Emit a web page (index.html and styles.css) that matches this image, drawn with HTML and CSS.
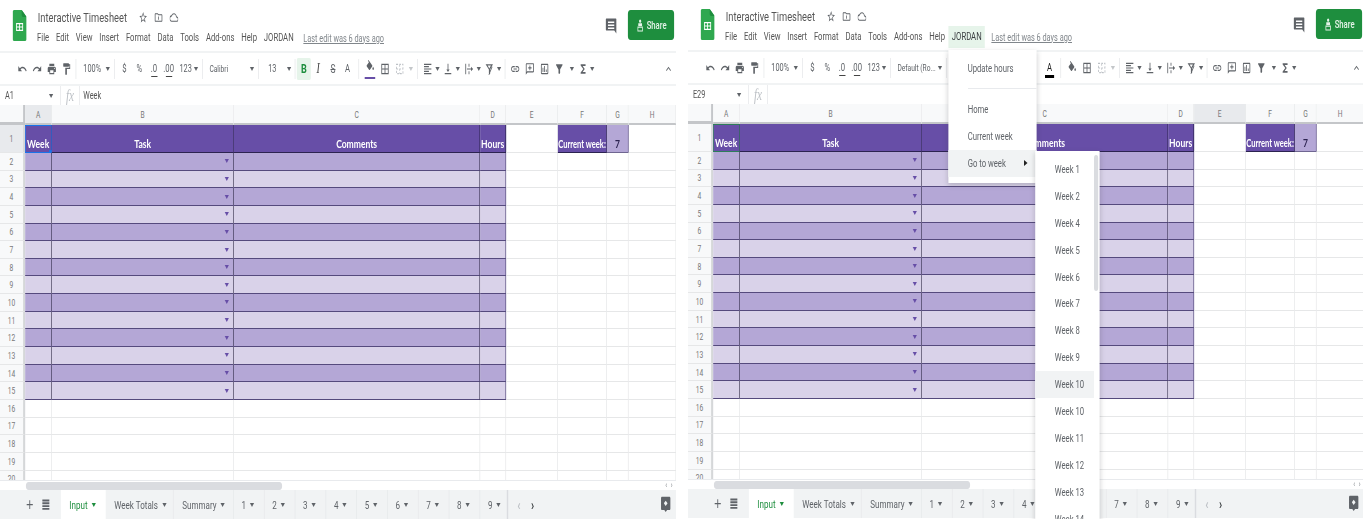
FILE: index.html
```html
<!DOCTYPE html>
<html lang="en">
  <head>
    <meta charset="UTF-8" />
    <title>Interactive Timesheet</title>
    <link rel="stylesheet" href="styles.css">
  </head>
  <body>
    <svg class="sprite" width="0" height="0">
      <symbol id="i-undo" viewBox="0 0 24 24"><path d="M12.5 8c-2.65 0-5.05.99-6.9 2.6L2 7v9h9l-3.62-3.62c1.39-1.16 3.16-1.88 5.12-1.88 3.54 0 6.55 2.31 7.6 5.5l2.37-.78C21.08 11.03 17.15 8 12.5 8z"/></symbol>
      <symbol id="i-redo" viewBox="0 0 24 24"><path d="M18.4 10.6C16.55 8.99 14.15 8 11.5 8c-4.65 0-8.58 3.03-9.96 7.22L3.9 16c1.05-3.19 4.05-5.5 7.6-5.5 1.95 0 3.73.72 5.12 1.88L13 16h9V7l-3.6 3.6z"/></symbol>
      <symbol id="i-print" viewBox="0 0 24 24"><path d="M19 8H5c-1.66 0-3 1.34-3 3v6h4v4h12v-4h4v-6c0-1.66-1.34-3-3-3zm-3 11H8v-5h8v5zm3-7c-.55 0-1-.45-1-1s.45-1 1-1 1 .45 1 1-.45 1-1 1zm-1-9H6v4h12V3z"/></symbol>
      <symbol id="i-paint" viewBox="0 0 24 24"><path d="M18 4V3c0-.55-.45-1-1-1H5c-.55 0-1 .45-1 1v4c0 .55.45 1 1 1h12c.55 0 1-.45 1-1V6h1v4H9v11c0 .55.45 1 1 1h2c.55 0 1-.45 1-1v-9h8V4h-3z"/></symbol>
      <symbol id="i-fill" viewBox="0 0 24 24"><path d="M16.56 8.94L7.62 0 6.21 1.41l2.38 2.38-5.15 5.15c-.59.59-.59 1.54 0 2.12l5.5 5.5c.29.29.68.44 1.06.44s.77-.15 1.06-.44l5.5-5.5c.59-.58.59-1.53 0-2.12zM19 11.5s-2 2.17-2 3.5c0 1.1.9 2 2 2s2-.9 2-2c0-1.33-2-3.5-2-3.5z"/></symbol>
      <symbol id="i-borders" viewBox="0 0 24 24"><path d="M3 3v18h18V3H3zm8 16H5v-6h6v6zm0-8H5V5h6v6zm8 8h-6v-6h6v6zm0-8h-6V5h6v6z"/></symbol>
      <symbol id="i-merge" viewBox="0 0 24 24"><path fill="none" stroke="currentColor" stroke-width="2" stroke-dasharray="4 3" d="M4 4h16v16H4zM4 12h16M12 4v16"/></symbol>
      <symbol id="i-align" viewBox="0 0 24 24"><path d="M15 15H3v2h12v-2zm0-8H3v2h12V7zM3 13h18v-2H3v2zm0 8h18v-2H3v2zM3 3v2h18V3H3z"/></symbol>
      <symbol id="i-valign" viewBox="0 0 24 24"><path d="M16 13h-3V3h-2v10H8l4 4 4-4zM4 19v2h16v-2H4z"/></symbol>
      <symbol id="i-wrap" viewBox="0 0 24 24"><path d="M3 3h2v18H3zM11 3h2v5h-2zM11 16h2v5h-2zM7 11h10V8l5 4-5 4v-3H7z"/></symbol>
      <symbol id="i-rotate" viewBox="0 0 24 24"><path d="M3 4h18l-7 9v8h-2l-1-2V13zm5 2l4 5 4-5z M20 8l-8 14h-2l8-14z"/></symbol>
      <symbol id="i-link" viewBox="0 0 24 24"><path d="M3.9 12c0-1.71 1.39-3.1 3.1-3.1h4V7H7c-2.76 0-5 2.24-5 5s2.24 5 5 5h4v-1.9H7c-1.71 0-3.1-1.39-3.1-3.1zM8 13h8v-2H8v2zm9-6h-4v1.9h4c1.71 0 3.1 1.39 3.1 3.1s-1.39 3.1-3.1 3.1h-4V17h4c2.76 0 5-2.24 5-5s-2.24-5-5-5z"/></symbol>
      <symbol id="i-comment" viewBox="0 0 24 24"><path d="M20 2H4c-1.1 0-2 .9-2 2v18l4-4h14c1.1 0 2-.9 2-2V4c0-1.1-.9-2-2-2zm0 14H5l-1 1V4h16v12zM11 6h2v3h3v2h-3v3h-2v-3H8V9h3z"/></symbol>
      <symbol id="i-chart" viewBox="0 0 24 24"><path d="M19 3H5c-1.1 0-2 .9-2 2v14c0 1.1.9 2 2 2h14c1.1 0 2-.9 2-2V5c0-1.1-.9-2-2-2zm0 16H5V5h14v14zM7 10h2v7H7zm4-3h2v10h-2zm4 6h2v4h-2z"/></symbol>
      <symbol id="i-filter" viewBox="0 0 24 24"><path d="M4.25 5.61C6.27 8.2 10 13 10 13v6c0 .55.45 1 1 1h2c.55 0 1-.45 1-1v-6s3.72-4.8 5.74-7.39c.51-.66.04-1.61-.79-1.61H5.04c-.83 0-1.3.95-.79 1.61z"/></symbol>
      <symbol id="i-sigma" viewBox="0 0 24 24"><path d="M18 4H6v2l6.5 6L6 18v2h12v-3h-7l5-5-5-5h7z"/></symbol>
      <symbol id="i-up" viewBox="0 0 24 24"><path d="M7.41 15.41L12 10.83l4.59 4.58L18 14l-6-6-6 6z"/></symbol>
      <symbol id="i-star" viewBox="0 0 24 24"><path d="M22 9.24l-7.19-.62L12 2 9.19 8.63 2 9.24l5.46 4.73L5.82 21 12 17.27 18.18 21l-1.63-7.03L22 9.24zM12 15.4l-3.76 2.27 1-4.28-3.32-2.88 4.38-.38L12 6.1l1.71 4.04 4.38.38-3.32 2.88 1 4.28L12 15.4z"/></symbol>
      <symbol id="i-folder" viewBox="0 0 24 24"><path d="M20 6h-8l-2-2H4c-1.1 0-2 .9-2 2v12c0 1.1.9 2 2 2h16c1.1 0 2-.9 2-2V8c0-1.1-.9-2-2-2zm0 12H4V6h5.17l2 2H20v10zM11 10h2v6h-2z"/></symbol>
      <symbol id="i-cloud" viewBox="0 0 24 24"><path d="M19.35 10.04C18.67 6.59 15.64 4 12 4 9.11 4 6.6 5.64 5.35 8.04 2.34 8.36 0 10.91 0 14c0 3.31 2.69 6 6 6h13c2.76 0 5-2.24 5-5 0-2.64-2.05-4.78-4.65-4.96zM19 18H6c-2.21 0-4-1.79-4-4s1.79-4 4-4h.71C7.37 7.69 9.48 6 12 6c3.04 0 5.5 2.46 5.5 5.5v.5H19c1.66 0 3 1.34 3 3s-1.34 3-3 3z"/></symbol>
      <symbol id="i-note" viewBox="0 0 24 24"><path d="M3 2h18c.6 0 1 .4 1 1v19l-4-4H3c-.6 0-1-.4-1-1V3c0-.6.4-1 1-1zm3 4v2h12V6zm0 4v2h12v-2zm0 4v2h12v-2z"/></symbol>
      <symbol id="i-person" viewBox="0 0 24 24"><path d="M12 1a3 3 0 110 6 3 3 0 010-6zM7 8h10v5H7zM5 14h14v9H5zm2 2v5h10v-5z"/></symbol>
      <symbol id="i-plus" viewBox="0 0 24 24"><path d="M19 13h-6v6h-2v-6H5v-2h6V5h2v6h6z"/></symbol>
      <symbol id="i-list" viewBox="0 0 24 24"><path d="M4 4h16v3H4zm0 4.500h16v3H4zM4 13h16v3H4zm0 4.500h16v3H4z"/></symbol>
      <symbol id="i-explore" viewBox="0 0 24 24"><path d="M4 1h16c1 0 2 1 2 2v16c0 1-1 2-2 2h-5l-3 3-3-3H4c-1 0-2-1-2-2V3c0-1 1-2 2-2zm8 6l-4 4 4 4 4-4z"/></symbol>
    </svg>

    <main class="screens">
      <section class="shot">
        <div class="app">
          <header class="topbar">
            <svg class="logo" viewBox="0 0 20 31" preserveAspectRatio="none"><path fill="#2fa84f" d="M2 0h11l7 7v22c0 1-1 2-2 2H2c-1 0-2-1-2-2V2C0 1 1 0 2 0z"/><path fill="#1e8e3e" d="M13 0l7 7h-5c-1 0-2-1-2-2z"/><path fill="#fff" d="M5 13h10v8H5zm1.200 1.200v2.200h3.200v-2.200zm4.400 0v2.200h3.200v-2.200zm-4.400 3.400v2.200h3.200v-2.200zm4.400 0v2.200h3.200v-2.200z" fill-rule="evenodd"/></svg>
            <div class="doc">
              <div class="doc-title">
                <span class="doc-name">Interactive Timesheet</span>
                <svg class="doc-icon"><use href="#i-star"/></svg>
                <svg class="doc-icon"><use href="#i-folder"/></svg>
                <svg class="doc-icon"><use href="#i-cloud"/></svg>
              </div>
              <nav class="menubar">
                <span>File</span><span>Edit</span><span>View</span><span>Insert</span><span>Format</span><span>Data</span><span>Tools</span><span>Add-ons</span><span>Help</span><span>JORDAN</span>
                <a class="last-edit">Last edit was 6 days ago</a>
              </nav>
            </div>
            <svg class="note-icon"><use href="#i-note"/></svg>
            <div class="share"><svg><use href="#i-person"/></svg>Share</div>
          </header>

          <div class="toolbar">
            <span class="tb"><svg><use href="#i-undo"/></svg></span>
            <span class="tb"><svg><use href="#i-redo"/></svg></span>
            <span class="tb"><svg><use href="#i-print"/></svg></span>
            <span class="tb"><svg><use href="#i-paint"/></svg></span>
            <i class="sep"></i>
            <span class="tb-txt tb-zoom">100%</span><i class="caret"></i>
            <i class="sep"></i>
            <span class="tb tb-sym">$</span><span class="tb tb-sym">%</span><span class="tb tb-sym">.0<u></u></span><span class="tb tb-sym">.00<u></u></span>
            <span class="tb-txt tb-num">123</span><i class="caret"></i>
            <i class="sep"></i>
            <span class="tb-txt tb-font">Calibri</span><i class="caret"></i>
            <i class="sep"></i>
            <span class="tb-txt tb-size">13</span><i class="caret"></i>
            <i class="sep sep-thin"></i>
            <span class="tb tb-bold is-on">B</span>
            <span class="tb tb-italic">I</span>
            <span class="tb tb-sym tb-strike">S</span>
            <span class="tb tb-sym">A</span>
            <i class="sep sep-wide"></i>
            <span class="tb tb-fill"><svg><use href="#i-fill"/></svg><b class="swatch"></b></span>
            <span class="tb"><svg><use href="#i-borders"/></svg></span>
            <span class="tb tb-dim"><svg><use href="#i-merge"/></svg></span><i class="caret caret-dim"></i>
            <i class="sep"></i>
            <span class="tb"><svg><use href="#i-align"/></svg></span><i class="caret caret-sm"></i>
            <span class="tb"><svg><use href="#i-valign"/></svg></span><i class="caret caret-sm"></i>
            <span class="tb"><svg><use href="#i-wrap"/></svg></span><i class="caret caret-sm"></i>
            <span class="tb"><svg><use href="#i-rotate"/></svg></span><i class="caret caret-sm"></i>
            <i class="sep"></i>
            <span class="tb"><svg><use href="#i-link"/></svg></span>
            <span class="tb"><svg><use href="#i-comment"/></svg></span>
            <span class="tb"><svg><use href="#i-chart"/></svg></span>
            <span class="tb"><svg><use href="#i-filter"/></svg></span><i class="caret caret-wide"></i>
            <span class="tb tb-sum"><svg><use href="#i-sigma"/></svg></span><i class="caret caret-sm"></i>
            <span class="tb tb-end"><svg><use href="#i-up"/></svg></span>
          </div>

          <div class="formula">
            <span class="name-box">A1</span><i class="caret"></i>
            <i class="sep sep-tall"></i>
            <span class="fx">fx</span>
            <i class="sep sep-tall"></i>
            <span class="formula-text">Week</span>
          </div>

          <div class="sheet" data-active="A1" data-col="A"></div>

          <div class="hscroll">
            <div class="hscroll-thumb"></div>
            <span class="hscroll-arrows">&#8249; &#8250;</span>
          </div>

          <footer class="tabs">
            <span class="tabs-tools"><svg><use href="#i-plus"/></svg><svg><use href="#i-list"/></svg></span>
            <span class="tab tab-input is-active">Input<i class="caret"></i></span>
            <span class="tab tab-totals">Week Totals<i class="caret"></i></span>
            <span class="tab tab-summary">Summary<i class="caret"></i></span>
            <span class="tab tab-n">1<i class="caret"></i></span>
            <span class="tab tab-n">2<i class="caret"></i></span>
            <span class="tab tab-n">3<i class="caret"></i></span>
            <span class="tab tab-n">4<i class="caret"></i></span>
            <span class="tab tab-n">5<i class="caret"></i></span>
            <span class="tab tab-n">6<i class="caret"></i></span>
            <span class="tab tab-n">7<i class="caret"></i></span>
            <span class="tab tab-n">8<i class="caret"></i></span>
            <span class="tab tab-n tab-last">9<i class="caret"></i></span>
            <span class="tab-nav"><b class="dim">&#8249;</b><b>&#8250;</b></span>
            <svg class="explore"><use href="#i-explore"/></svg>
          </footer>
        </div>
      </section>

      <section class="shot shot-right">
        <div class="app">
          <header class="topbar">
            <svg class="logo" viewBox="0 0 20 31" preserveAspectRatio="none"><path fill="#2fa84f" d="M2 0h11l7 7v22c0 1-1 2-2 2H2c-1 0-2-1-2-2V2C0 1 1 0 2 0z"/><path fill="#1e8e3e" d="M13 0l7 7h-5c-1 0-2-1-2-2z"/><path fill="#fff" d="M5 13h10v8H5zm1.200 1.200v2.200h3.200v-2.200zm4.400 0v2.200h3.200v-2.200zm-4.400 3.400v2.200h3.200v-2.200zm4.400 0v2.200h3.200v-2.200z" fill-rule="evenodd"/></svg>
            <div class="doc">
              <div class="doc-title">
                <span class="doc-name">Interactive Timesheet</span>
                <svg class="doc-icon"><use href="#i-star"/></svg>
                <svg class="doc-icon"><use href="#i-folder"/></svg>
                <svg class="doc-icon"><use href="#i-cloud"/></svg>
              </div>
              <nav class="menubar">
                <span>File</span><span>Edit</span><span>View</span><span>Insert</span><span>Format</span><span>Data</span><span>Tools</span><span>Add-ons</span><span>Help</span><span class="is-open">JORDAN</span>
                <a class="last-edit">Last edit was 6 days ago</a>
              </nav>
            </div>
            <svg class="note-icon"><use href="#i-note"/></svg>
            <div class="share"><svg><use href="#i-person"/></svg>Share</div>
          </header>

          <div class="toolbar">
            <span class="tb"><svg><use href="#i-undo"/></svg></span>
            <span class="tb"><svg><use href="#i-redo"/></svg></span>
            <span class="tb"><svg><use href="#i-print"/></svg></span>
            <span class="tb"><svg><use href="#i-paint"/></svg></span>
            <i class="sep"></i>
            <span class="tb-txt tb-zoom">100%</span><i class="caret"></i>
            <i class="sep"></i>
            <span class="tb tb-sym">$</span><span class="tb tb-sym">%</span><span class="tb tb-sym">.0<u></u></span><span class="tb tb-sym">.00<u></u></span>
            <span class="tb-txt tb-num">123</span><i class="caret"></i>
            <i class="sep"></i>
            <span class="tb-txt tb-font">Default (Ro...</span><i class="caret"></i>
            <i class="sep"></i>
            <span class="tb-gap"></span>
            <span class="tb tb-sym tb-color">A</span>
            <i class="sep sep-wide"></i>
            <span class="tb"><svg><use href="#i-fill"/></svg></span>
            <span class="tb"><svg><use href="#i-borders"/></svg></span>
            <span class="tb tb-dim"><svg><use href="#i-merge"/></svg></span><i class="caret caret-dim"></i>
            <i class="sep"></i>
            <span class="tb"><svg><use href="#i-align"/></svg></span><i class="caret caret-sm"></i>
            <span class="tb"><svg><use href="#i-valign"/></svg></span><i class="caret caret-sm"></i>
            <span class="tb"><svg><use href="#i-wrap"/></svg></span><i class="caret caret-sm"></i>
            <span class="tb"><svg><use href="#i-rotate"/></svg></span><i class="caret caret-sm"></i>
            <i class="sep"></i>
            <span class="tb"><svg><use href="#i-link"/></svg></span>
            <span class="tb"><svg><use href="#i-comment"/></svg></span>
            <span class="tb"><svg><use href="#i-chart"/></svg></span>
            <span class="tb"><svg><use href="#i-filter"/></svg></span><i class="caret caret-wide"></i>
            <span class="tb tb-sum"><svg><use href="#i-sigma"/></svg></span><i class="caret caret-sm"></i>
            <span class="tb tb-end"><svg><use href="#i-up"/></svg></span>
          </div>

          <div class="formula">
            <span class="name-box">E29</span><i class="caret"></i>
            <i class="sep sep-tall"></i>
            <span class="fx">fx</span>
            <i class="sep sep-tall"></i>
          </div>

          <div class="sheet" data-col="E"></div>

          <div class="hscroll">
            <div class="hscroll-thumb"></div>
            <span class="hscroll-arrows">&#8249; &#8250;</span>
          </div>

          <footer class="tabs">
            <span class="tabs-tools"><svg><use href="#i-plus"/></svg><svg><use href="#i-list"/></svg></span>
            <span class="tab tab-input is-active">Input<i class="caret"></i></span>
            <span class="tab tab-totals">Week Totals<i class="caret"></i></span>
            <span class="tab tab-summary">Summary<i class="caret"></i></span>
            <span class="tab tab-n">1<i class="caret"></i></span>
            <span class="tab tab-n">2<i class="caret"></i></span>
            <span class="tab tab-n">3<i class="caret"></i></span>
            <span class="tab tab-n">4<i class="caret"></i></span>
            <span class="tab tab-n tab-covered">5<i class="caret"></i></span>
            <span class="tab tab-n tab-covered">6<i class="caret"></i></span>
            <span class="tab tab-n">7<i class="caret"></i></span>
            <span class="tab tab-n">8<i class="caret"></i></span>
            <span class="tab tab-n tab-last">9<i class="caret"></i></span>
            <span class="tab-nav"><b class="dim">&#8249;</b><b>&#8250;</b></span>
            <svg class="explore"><use href="#i-explore"/></svg>
          </footer>

          <div class="menu">
            <div class="menu-item">Update hours</div>
            <div class="menu-line"></div>
            <div class="menu-item">Home</div>
            <div class="menu-item">Current week</div>
            <div class="menu-item is-hover">Go to week<i class="menu-arrow"></i></div>
          </div>

          <div class="submenu">
            <div class="submenu-item">Week 1</div>
            <div class="submenu-item">Week 2</div>
            <div class="submenu-item">Week 4</div>
            <div class="submenu-item">Week 5</div>
            <div class="submenu-item">Week 6</div>
            <div class="submenu-item">Week 7</div>
            <div class="submenu-item">Week 8</div>
            <div class="submenu-item">Week 9</div>
            <div class="submenu-item is-hover">Week 10</div>
            <div class="submenu-item">Week 10</div>
            <div class="submenu-item">Week 11</div>
            <div class="submenu-item">Week 12</div>
            <div class="submenu-item">Week 13</div>
            <div class="submenu-item">Week 14</div>
            <div class="submenu-thumb"></div>
          </div>
        </div>
      </section>
    </main>
    <script src="script.js"></script>
  </body>
</html>
```

FILE: styles.css
```css
/* the capture is squeezed sideways, so each app is laid out wide and scaled by .7 */
body {
  margin: 0;
  height: 519px;
  overflow: hidden;
  background: #ffffff;
  font-family: Roboto, "Liberation Sans", sans-serif;
  color: #5f6368;
}
.sprite {
  display: block;
  height: 0;
}
.screens {
  display: flex;
  gap: 12px;
}
.shot {
  width: 676px;
  height: 519px;
  overflow: hidden;
  flex: none;
}
.shot-right {
  width: 675px;
  margin-top: -1px;
  height: 520px;
}
.app {
  position: relative;
  width: 966px;
  height: 520px;
  transform: scaleX(0.7);
  transform-origin: left top;
  filter: blur(0.5px);
}
i {
  font-style: normal;
}

/* title bar */
.topbar {
  display: flex;
  align-items: flex-start;
  box-sizing: border-box;
  height: 53px;
  padding: 10px 3px 0 18px;
  border-bottom: 2px solid #f1f3f4;
}
.logo {
  width: 20px;
  height: 31px;
  flex: none;
}
.doc {
  margin-left: 10px;
  flex: 1;
}
.doc-title {
  display: flex;
  align-items: center;
  height: 14px;
  padding-left: 6px;
}
.doc-name {
  font-size: 13.300px;
  color: #555;
  margin-right: 17px;
}
.doc-icon {
  width: 13px;
  height: 13px;
  margin-right: 9px;
  fill: #5f6368;
}
.menubar {
  display: flex;
  align-items: center;
  height: 22px;
  margin-top: 3px;
  font-size: 11px;
  color: #555;
}
.menubar span {
  padding: 0 4.900px;
  line-height: 22px;
}
.menubar .is-open {
  background: #e6f4ea;
  color: #3c4043;
}
.last-edit {
  margin-left: 9px;
  font-size: 10.500px;
  color: #80868b;
  text-decoration: underline;
}
.note-icon {
  width: 18px;
  height: 18px;
  margin: 7px 15px 0 0;
  fill: #5f6368;
}
.share {
  display: flex;
  align-items: center;
  justify-content: center;
  gap: 3px;
  width: 66px;
  height: 30px;
  border-radius: 4px;
  background: #1e8e3e;
  color: #e6f4ea;
  font-size: 11px;
  font-weight: 500;
}
.share svg {
  width: 13px;
  height: 15px;
  fill: #e6f4ea;
}

/* toolbar */
.toolbar {
  display: flex;
  align-items: center;
  box-sizing: border-box;
  height: 33px;
  padding-left: 21px;
  border-bottom: 2px solid #f1f3f4;
  font-size: 10.500px;
  color: #5f6368;
}
.tb {
  display: flex;
  align-items: center;
  justify-content: center;
  position: relative;
  flex: none;
  width: 21px;
  height: 22px;
}
.tb svg {
  width: 14px;
  height: 14px;
  fill: currentColor;
  color: #5f6368;
}
.tb-sym {
  font-size: 11px;
}
.tb-sym u {
  position: absolute;
  left: 7px;
  right: 5px;
  bottom: 3px;
  height: 1px;
  background: #444;
}
.tb-txt {
  flex: none;
}
.tb-zoom {
  padding: 0 4px 0 7px;
}
.tb-num {
  padding-left: 5px;
}
.tb-font {
  width: 55px;
  padding-left: 6px;
  font-size: 9.500px;
  white-space: nowrap;
}
.tb-size {
  width: 24px;
  padding-left: 10px;
  box-sizing: content-box;
}
/* space of the controls that lie under the open menu */
.tb-gap {
  flex: none;
  width: 133px;
}
.tb-bold {
  width: 20px;
  margin-left: 1px;
  font-size: 13px;
  font-weight: 700;
  color: #444;
  border-radius: 2px;
}
.tb-bold.is-on {
  background: #e6f4ea;
  color: #1e8e3e;
}
.tb-italic {
  font-family: "Liberation Serif", serif;
  font-size: 14px;
  font-style: italic;
  color: #444;
}
.tb-strike {
  text-decoration: line-through;
  font-size: 12px;
}
.tb-color {
  color: #222;
}
.tb-color::after {
  content: "";
  position: absolute;
  left: 4px;
  right: 4px;
  bottom: 1px;
  height: 3px;
  background: #000;
}
.tb-fill svg {
  margin-bottom: 3px;
}
.swatch {
  position: absolute;
  left: 3px;
  right: 3px;
  bottom: 1px;
  height: 2px;
  background: #674ea7;
}
.tb-dim svg {
  color: #bdc1c6;
}
.tb-sum {
  width: 18px;
}
.tb-end {
  margin-left: auto;
  margin-right: 1px;
}
.caret {
  flex: none;
  width: 0;
  height: 0;
  margin: 0 3px;
  border-left: 3px solid transparent;
  border-right: 3px solid transparent;
  border-top: 4px solid #5f6368;
}
.caret-sm {
  margin: 0 2px 0 0.500px;
}
.caret-wide {
  margin: 0 4px 0 5px;
}
.caret-dim {
  border-top-color: #c4c7ca;
}
.sep {
  flex: none;
  width: 1px;
  height: 20px;
  margin: 0 3px;
  background: #e4e6e8;
}
.sep-thin {
  margin: 0 1px 0 2px;
}
.sep-wide {
  margin: 0 5px;
}
.sep-tall {
  height: 19px;
  margin: 0 5px;
}

/* formula bar */
.formula {
  display: flex;
  align-items: center;
  box-sizing: border-box;
  height: 19px;
  padding-left: 7px;
  font-size: 10.500px;
  color: #555;
}
.name-box {
  width: 58px;
}
.formula .caret {
  margin: 0 5px;
}
.fx {
  width: 16px;
  font-family: "Liberation Serif", serif;
  font-style: italic;
  font-size: 16px;
  color: #bdc1c6;
  text-align: center;
}

/* grid */
.sheet {
  display: grid;
  grid-template-columns: 35.700px 38.600px 260px 351.400px 37.100px 74.300px 70px 31.400px 67.100px;
  grid-template-rows: 20px 28px;
  grid-auto-rows: 17.650px;
  height: 375px;
  overflow: hidden;
  align-content: start;
}
.cell,
.hd {
  display: flex;
  align-items: center;
  justify-content: center;
  box-sizing: border-box;
  position: relative;
  min-width: 0;
  border-right: 1px solid #e6e7e8;
  border-bottom: 1px solid #e6e7e8;
}
.hd {
  background: #f8f9fa;
  font-size: 9.500px;
  color: #777;
}
.hd.is-sel {
  background: #e8eaed;
}
.hd-corner {
  border-right: 3px solid #c4c6c9;
  border-bottom: 3px solid #c4c6c9;
}
.hd-col {
  border-bottom: 2px solid #c4c6c9;
}
.hd-row {
  border-right: 3px solid #d5d7d9;
}
.cell-title,
.cell-value {
  align-items: flex-end;
  padding-bottom: 1px;
  font-family: Lato, "Liberation Sans", sans-serif;
  font-weight: 700;
  font-size: 12.200px;
  line-height: 15px;
  white-space: nowrap;
}
.cell-title {
  background: #674ea7;
  color: #ffffff;
  border-right: 1.500px solid #2c2350;
  border-bottom: 1.500px solid #2c2350;
}
.cell-f {
  font-size: 10.800px;
}
.cell-value {
  background: #b4a7d6;
  color: #2c2350;
  border-right: 1.500px solid #6f6691;
  border-bottom: 1.500px solid #6f6691;
}
.band-a,
.band-b {
  border-bottom: 1.500px solid #554a7d;
  border-right: 1.500px solid #221c3a;
}
.band-a {
  background: #b4a7d6;
}
.band-b {
  background: #d9d2e9;
}
.band-end {
  border-right-color: #5a5180;
}
.cell-drop {
  justify-content: flex-end;
  padding-right: 6px;
}
.cell-drop::after {
  content: "";
  border-left: 3px solid transparent;
  border-right: 3px solid transparent;
  border-top: 4px solid #674ea7;
}
.is-active-cell {
  outline: 1.500px solid #1a73e8;
  outline-offset: -1px;
}
.is-active-cell::after {
  content: "";
  position: absolute;
  right: -3px;
  bottom: -3px;
  width: 6px;
  height: 5px;
  background: #1a73e8;
}
.is-collab-cell {
  outline: 1.500px solid #2e7d5b;
  outline-offset: -1px;
}

/* horizontal scrollbar */
.hscroll {
  display: flex;
  align-items: center;
  justify-content: space-between;
  height: 10px;
  padding-left: 37px;
  padding-right: 5px;
  border-top: 1px solid #e8eaed;
  box-sizing: border-box;
}
.hscroll-thumb {
  width: 366px;
  height: 8px;
  border-radius: 4px;
  background: #dadce0;
}
.hscroll-arrows {
  font-size: 9px;
  line-height: 9px;
  color: #80868b;
  word-spacing: 3px;
}

/* sheet tabs */
.tabs {
  display: flex;
  align-items: stretch;
  height: 29px;
  background: #f1f3f4;
  font-size: 11.500px;
  color: #5f6368;
}
.tabs-tools {
  display: flex;
  align-items: center;
  justify-content: flex-end;
  gap: 8px;
  box-sizing: border-box;
  width: 87px;
  padding-right: 14px;
}
.tabs-tools svg {
  width: 15px;
  height: 15px;
  fill: #5f6368;
}
.tab {
  display: flex;
  align-items: center;
  box-sizing: border-box;
  flex: none;
  padding-left: 12px;
  border-right: 1px solid #e6e8ea;
}
.tab .caret {
  margin-left: 6px;
}
.tab-input {
  width: 64.300px;
}
.tab-totals {
  width: 97px;
}
.tab-summary {
  width: 85.700px;
}
.tab-n {
  width: 44px;
  padding-left: 11px;
}
.tab-covered {
  color: transparent;
}
.tab-last {
  width: 40px;
  border-right: 2px solid #dadce0;
}
.tab.is-active {
  background: #ffffff;
  color: #1e8e3e;
  border-right: 0;
}
.tab.is-active .caret {
  border-top-color: #1e8e3e;
}
.tab-nav {
  display: flex;
  align-items: center;
  gap: 15px;
  padding-left: 13px;
  font-size: 15px;
}
.tab-nav b {
  color: #3c4043;
}
.tab-nav .dim {
  color: #bdc1c6;
}
.explore {
  width: 16px;
  height: 20px;
  margin: 4px 7px 0 auto;
  fill: #5f6368;
}

/* JORDAN menu */
.menu,
.submenu {
  position: absolute;
  box-sizing: border-box;
  background: #ffffff;
  font-size: 11px;
  color: #5f6368;
  box-shadow: 0 2px 6px rgba(60, 64, 67, 0.25);
}
.menu {
  left: 371.500px;
  top: 51px;
  width: 126px;
  height: 133px;
  padding-top: 5px;
}
.menu-item {
  display: flex;
  align-items: center;
  justify-content: space-between;
  height: 27px;
  padding: 0 13px 0 28px;
}
.menu-line {
  height: 1px;
  margin: 6px 0 6.500px 28px;
  background: #e8eaed;
}
.menu-item.is-hover {
  background: #f1f3f4;
}
.menu-arrow {
  border-left: 5px solid #222;
  border-top: 3px solid transparent;
  border-bottom: 3px solid transparent;
}
.submenu {
  left: 496px;
  top: 152px;
  width: 92px;
  height: 380px;
  padding: 5px 8px 0 0;
}
.submenu-item {
  display: flex;
  align-items: center;
  height: 26.900px;
  padding-left: 28px;
}
.submenu-item.is-hover {
  background: #f1f3f4;
}
.submenu-thumb {
  position: absolute;
  top: 4px;
  right: 2px;
  width: 6px;
  height: 136px;
  border-radius: 3px;
  background: #dadce0;
}
```

FILE: script.js
```js
// Builds the 20 rows of both spreadsheets
const columns = ["A", "B", "C", "D", "E", "F", "G", "H"];
const titles = { A: "Week", B: "Task", C: "Comments", D: "Hours", F: "Current week:" };

function makeCell(className, text) {
  const cell = document.createElement("div");
  cell.className = className;
  if (text) cell.textContent = text;
  return cell;
}

function buildRow(sheet, row) {
  const selected = row === 1 && sheet.dataset.active;
  sheet.append(makeCell("hd hd-row" + (selected ? " is-sel" : ""), String(row)));

  columns.forEach((col) => {
    let name = "cell";
    let text = "";

    if (row === 1 && titles[col]) {
      name += " cell-title";
      text = titles[col];
      if (col === "A") name += sheet.dataset.active ? " is-active-cell" : " is-collab-cell";
      if (col === "F") name += " cell-f";
    } else if (row === 1 && col === "G") {
      name += " cell-value";
      text = "7";
    } else if (row >= 2 && row <= 15 && "ABCD".includes(col)) {
      name += row % 2 === 0 ? " band-a" : " band-b";
      if (col === "B") name += " cell-drop";
      if (col === "D") name += " band-end";
    }
    sheet.append(makeCell(name, text));
  });
}

document.querySelectorAll(".sheet").forEach((sheet) => {
  sheet.append(makeCell("hd hd-corner"));
  columns.forEach((col) => {
    const sel = col === sheet.dataset.col ? " is-sel" : "";
    sheet.append(makeCell("hd hd-col" + sel, col));
  });
  for (let row = 1; row <= 20; row++) buildRow(sheet, row);
});
```
